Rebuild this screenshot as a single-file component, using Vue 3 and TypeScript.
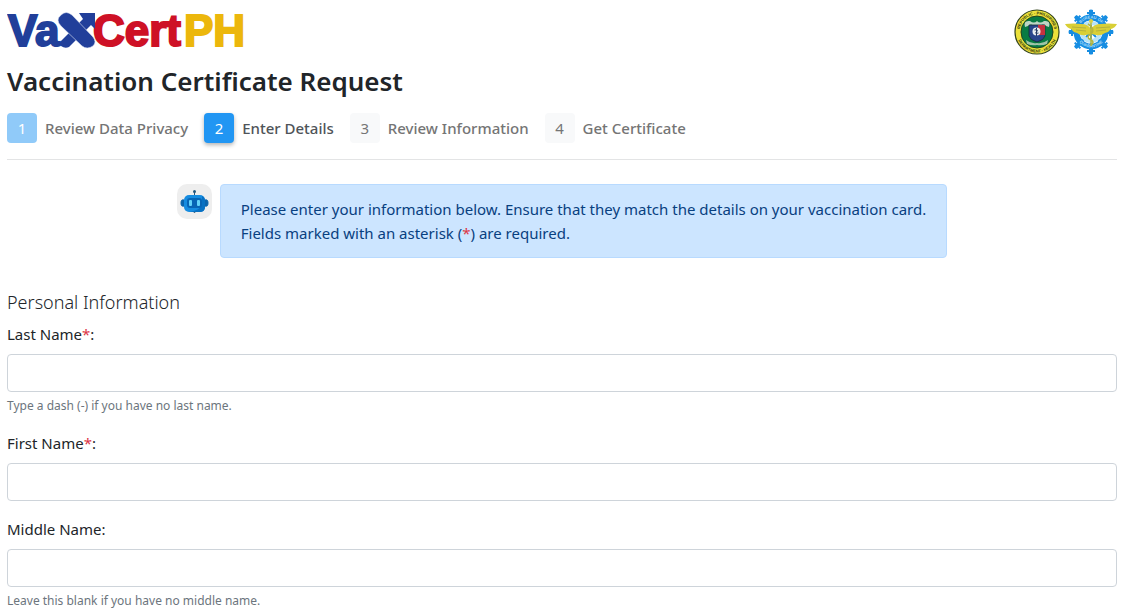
<script setup lang="ts">
import { reactive } from 'vue'

interface Step {
  number: number
  label: string
  state: 'done' | 'active' | 'upcoming'
}

interface Field {
  id: 'lastName' | 'firstName' | 'middleName'
  label: string
  required: boolean
  help?: string
}

const steps: Step[] = [
  { number: 1, label: 'Review Data Privacy', state: 'done' },
  { number: 2, label: 'Enter Details', state: 'active' },
  { number: 3, label: 'Review Information', state: 'upcoming' },
  { number: 4, label: 'Get Certificate', state: 'upcoming' },
]

const fields: Field[] = [
  { id: 'lastName', label: 'Last Name', required: true, help: 'Type a dash (-) if you have no last name.' },
  { id: 'firstName', label: 'First Name', required: true },
  { id: 'middleName', label: 'Middle Name', required: false, help: 'Leave this blank if you have no middle name.' },
]

const form = reactive({ lastName: '', firstName: '', middleName: '' })
const spokes = [0, 45, 90, 135, 180, 225, 270, 315]
</script>

<template>
  <div class="page">
    <header class="brand-bar">
      <svg class="logo" width="244" height="56" viewBox="0 -8 244 56" role="img" aria-label="VaXCertPH">
        <g class="logo-text">
          <text x="1" y="35" fill="#213f9a" stroke="#213f9a">Va</text>
          <text x="86" y="35" fill="#ce1126" stroke="#ce1126">Cert</text>
          <text x="177" y="35" fill="#ecb70c" stroke="#ecb70c">PH</text>
        </g>
        <path d="M54 30 L76 8 L72 2 H88 V18 L84 14 L62 36 Q58 38 54 35 Q51 33 54 30Z" fill="#213f9a" />
        <path d="M54 4 Q59 -1 65 4 L86 26 Q90 31 86 35 Q80 39 75 35 L54 15 Q48 9 54 4Z" fill="#213f9a" stroke="#dfe5f4" stroke-width="0.6" />
      </svg>
      <div class="seals">
        <svg width="46" height="46" viewBox="0 0 46 46" role="img" aria-label="Department of Health">
          <defs>
            <path id="doh-top" d="M5.500 23 A17.500 17.500 0 0 1 40.500 23" />
            <path id="doh-bottom" d="M2.500 23 A20.500 20.500 0 0 0 43.500 23" />
          </defs>
          <circle cx="23" cy="23" r="22" fill="#ece13a" stroke="#34451c" stroke-width="1.2" />
          <g class="seal-text" fill="#29330c">
            <text><textPath href="#doh-top" startOffset="50%" text-anchor="middle">REPUBLIC · PHILIPPINES</textPath></text>
            <text><textPath href="#doh-bottom" startOffset="50%" text-anchor="middle">DEPARTMENT · HEALTH</textPath></text>
          </g>
          <circle cx="23" cy="23" r="16" fill="#087b43" stroke="#24451f" />
          <path d="M11 18 Q9 11 16 12 Q20 15 23 12 Q26 15 30 12 Q37 11 35 18 L32 17 Q29 14 26 17 H20 Q17 14 14 17Z" fill="#bdd5c4" />
          <path d="M15 16 H31 V27 Q30 31 23 33 Q16 31 15 27Z" fill="#28458b" stroke="#182b38" stroke-width="0.8" />
          <path d="M24 16 H31 V26 H24Z" fill="#c5323f" />
          <circle cx="22.500" cy="22.500" r="4" fill="#e9eef0" />
          <path d="M22.500 19 V27 M20.500 21 Q25 20 22.500 23 Q20 25 24.500 24" fill="none" stroke="#243a66" />
          <path d="M12 31 Q17 35 23 34 Q29 35 34 31 L33 35 Q28 37 23 36 Q18 37 13 35Z" fill="#9fc4a8" />
        </svg>
        <svg width="52" height="46" viewBox="0 0 52 46" role="img" aria-label="Bureau of Quarantine">
          <defs>
            <path id="boq-top" d="M12.500 23 A13.500 13.500 0 0 1 39.500 23" />
            <path id="boq-bottom" d="M10.500 23 A15.500 15.500 0 0 0 41.500 23" />
          </defs>
          <g fill="#168de2">
            <g v-for="angle in spokes" :key="angle" :transform="`rotate(${angle} 26 23)`">
              <path d="M24 10 V5 H22 V3 H24 V1 Q26 0 28 1 V3 H30 V5 H28 V10Z" />
              <path d="M25 10 H27 V23 H25Z" />
            </g>
          </g>
          <circle cx="26" cy="23" r="9" fill="none" stroke="#b9e3f5" stroke-width="4" />
          <circle cx="26" cy="23" r="14.500" fill="none" stroke="#168de2" stroke-width="6" />
          <g class="seal-text" fill="#a9dcf8">
            <text><textPath href="#boq-top" startOffset="50%" text-anchor="middle">BUREAU OF</textPath></text>
            <text><textPath href="#boq-bottom" startOffset="50%" text-anchor="middle">QUARANTINE</textPath></text>
          </g>
          <path d="M0 15 Q9 14 16 15 Q23 15 26 20 Q29 15 36 15 Q43 14 52 15 Q50 19 46 20 Q44 23 40 24 Q36 27 31 26 L26 25 L21 26 Q16 27 12 24 Q8 23 6 20 Q2 19 0 15Z" fill="#d9cf35" />
          <path d="M7 18 L21 19 M11 21 L21 22 M45 18 L31 19 M41 21 L31 22" stroke="#a9aa3b" stroke-width="0.8" />
          <path d="M26 11 V37 M23 15 Q31 20 26 25 Q20 28 26 31 Q30 33 26 36" fill="none" stroke="#b6b53c" stroke-width="1.500" />
          <circle cx="26" cy="12" r="2" fill="#dcd144" />
        </svg>
      </div>
    </header>

    <main>
      <h1>Vaccination Certificate Request</h1>
      <ol class="steps">
        <li v-for="step in steps" :key="step.number" :class="['step', step.state]" :aria-current="step.state === 'active' ? 'step' : undefined">
          <span class="step-number">{{ step.number }}</span>
          <span class="step-label">{{ step.label }}</span>
        </li>
      </ol>

      <div class="notice">
        <div class="bot">
          <svg width="29" height="25" viewBox="0 0 29 25" aria-hidden="true">
            <path d="M14.500 2 V7" stroke="#23567e" stroke-width="1" />
            <circle cx="14.500" cy="2.500" r="1.500" fill="#23567e" />
            <path d="M4 11 Q1 10 1 14 Q1 18 4 17Z M25 11 Q28 10 28 14 Q28 18 25 17Z" fill="#0b65ad" stroke="#0b65ad" />
            <path d="M11 21 H18 L14.500 24Z" fill="#244d6d" />
            <rect x="4" y="6" width="21" height="17" rx="5" fill="#168ce0" />
            <path d="M22 7 Q25 8 25 12 V18 Q25 23 20 23 H10 Q20 21 22 16Z" fill="#0871c3" />
            <rect x="7" y="9" width="15" height="10" rx="3" fill="#0765b5" />
            <rect x="9" y="11" width="3" height="6" rx="1" fill="#63d3fa" />
            <rect x="17" y="11" width="3" height="6" rx="1" fill="#63d3fa" />
          </svg>
        </div>
        <p class="message">
          Please enter your information below. Ensure that they match the details on your vaccination card.<br>
          Fields marked with an asterisk (<span class="required">*</span>) are required.
        </p>
      </div>

      <form @submit.prevent>
        <h2>Personal Information</h2>
        <div v-for="field in fields" :key="field.id" class="field">
          <label :for="field.id">{{ field.label }}<span v-if="field.required" class="required">*</span>:</label>
          <input :id="field.id" v-model="form[field.id]" type="text" :required="field.required" :aria-describedby="field.help ? `${field.id}-help` : undefined">
          <small v-if="field.help" :id="`${field.id}-help`">{{ field.help }}</small>
        </div>
      </form>
    </main>
  </div>
</template>

<style>
html {
  scrollbar-width: none;
}

body {
  margin: 0;
  background: #fff;
}
</style>

<style scoped>
.page,
.page * {
  box-sizing: border-box;
}

.page {
  padding: 0 9px 0 7px;
  color: #212529;
  font-family: "Segoe UI", "Noto Sans", sans-serif;
  font-size: 15px;
  line-height: 24px;
}

.brand-bar {
  display: flex;
  justify-content: space-between;
  padding-top: 3px;
  height: 64px;
}

.logo-text {
  font: bold 44px "Liberation Sans", Arial, sans-serif;
  stroke-width: 2px;
}

.seals {
  display: flex;
  gap: 5px;
  margin-top: 6px;
}

.seal-text {
  font: bold 4px "Liberation Sans", Arial, sans-serif;
}

h1 {
  margin: 0 0 15px;
  font-size: 26px;
  font-weight: 600;
  line-height: 34px;
}

.steps {
  display: flex;
  gap: 16px;
  margin: 0 0 24px;
  padding: 0 0 16px;
  border-bottom: 1px solid #e3e4e5;
  list-style: none;
}

.step {
  display: flex;
  align-items: center;
  gap: 8px;
  color: #757575;
}

.step-number {
  display: grid;
  place-items: center;
  width: 30px;
  height: 30px;
  border-radius: 4px;
  background: #f8f9fa;
}

.step-label {
  font-weight: 500;
}

.done .step-number {
  background: #90caf9;
  color: #fff;
}

.active {
  color: #4f5459;
}

.active .step-number {
  background: #2196f3;
  box-shadow: 0 2px 4px rgb(0 0 0 / 30%);
  color: #fff;
}

.notice {
  display: flex;
  justify-content: center;
  gap: 8px;
  margin-bottom: 32px;
}

.bot {
  display: grid;
  flex: none;
  place-items: center;
  width: 35px;
  height: 35px;
  border-radius: 10px;
  background: #eee;
}

.message {
  margin: 0;
  padding: 12px 20px;
  border: 1px solid #b8daff;
  border-radius: 4px;
  background: #cce5ff;
  color: #084080;
}

.required {
  color: #dc3545;
}

h2 {
  margin: 0 0 8px;
  font-size: 18px;
  font-weight: 300;
  line-height: 24px;
}

.field {
  display: flex;
  flex-direction: column;
  margin-bottom: 16px;
}

label {
  align-self: flex-start;
  margin-bottom: 8px;
}

input {
  width: 100%;
  height: 38px;
  padding: 6px 12px;
  border: 1px solid #ced4da;
  border-radius: 4px;
  background: #fff;
  color: #495057;
  font: inherit;
}

small {
  margin-top: 4px;
  color: #6c757d;
  font-size: 12px;
  line-height: 19px;
}
</style>
